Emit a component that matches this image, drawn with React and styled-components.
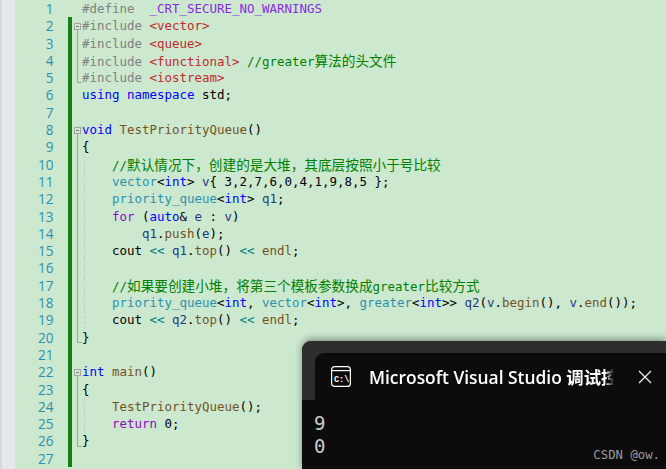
import React from "react";
import styled, { createGlobalStyle } from "styled-components";

const Global = createGlobalStyle`
  html, body { margin: 0; padding: 0; background: #cce8cf; }
  #root { width: 666px; height: 469px; overflow: hidden; }
`;

const colors = {
  pre: "#808080",
  macro: "#8a2be2",
  inc: "#c02a2a",
  kw: "#0000ff",
  type: "#2b91af",
  fn: "#74531f",
  com: "#008000",
  local: "#1f377f",
  op: "#008080",
  ret: "#8f08c4",
  txt: "#000000",
};

// [text, kind]; kind "han" is the comment's chinese text
const lines = [
  { t: [["#define  ", "pre"], ["_CRT_SECURE_NO_WARNINGS", "macro"]] },
  { fold: "open", t: [["#include ", "pre"], ["<vector>", "inc"]] },
  { fold: "line", t: [["#include ", "pre"], ["<queue>", "inc"]] },
  { fold: "line", t: [["#include ", "pre"], ["<functional>", "inc"], [" ", "txt"], ["//greater", "com"], ["算法的头文件", "han"]] },
  { fold: "end", t: [["#include ", "pre"], ["<iostream>", "inc"]] },
  { t: [["using namespace", "kw"], [" std;", "txt"]] },
  { t: [] },
  { fold: "open", t: [["void", "kw"], [" ", "txt"], ["TestPriorityQueue", "fn"], ["()", "txt"]] },
  { fold: "line", t: [["{", "txt"]] },
  { fold: "line", guide: 1, t: [["    //", "com"], ["默认情况下，创建的是大堆，其底层按照小于号比较", "han"]] },
  { fold: "line", guide: 1, t: [["    ", "txt"], ["vector", "type"], ["<", "txt"], ["int", "kw"], ["> ", "txt"], ["v", "local"], ["{ 3,2,7,6,0,4,1,9,8,5 };", "txt"]] },
  { fold: "line", guide: 1, t: [["    ", "txt"], ["priority_queue", "type"], ["<", "txt"], ["int", "kw"], ["> ", "txt"], ["q1", "local"], [";", "txt"]] },
  { fold: "line", guide: 1, t: [["    ", "txt"], ["for", "ret"], [" (", "txt"], ["auto", "kw"], ["& ", "txt"], ["e", "local"], [" : ", "txt"], ["v", "local"], [")", "txt"]] },
  { fold: "line", guide: 1, t: [["        ", "txt"], ["q1", "local"], [".", "txt"], ["push", "fn"], ["(", "txt"], ["e", "local"], [");", "txt"]] },
  { fold: "line", guide: 1, t: [["    cout ", "txt"], ["<<", "op"], [" ", "txt"], ["q1", "local"], [".", "txt"], ["top", "fn"], ["() ", "txt"], ["<<", "op"], [" ", "txt"], ["endl", "fn"], [";", "txt"]] },
  { fold: "line", guide: 1, t: [] },
  { fold: "line", guide: 1, t: [["    //", "com"], ["如果要创建小堆，将第三个模板参数换成", "han"], ["greater", "com"], ["比较方式", "han"]] },
  { fold: "line", guide: 1, t: [["    ", "txt"], ["priority_queue", "type"], ["<", "txt"], ["int", "kw"], [", ", "txt"], ["vector", "type"], ["<", "txt"], ["int", "kw"], [">, ", "txt"], ["greater", "type"], ["<", "txt"], ["int", "kw"], [">> ", "txt"], ["q2", "local"], ["(", "txt"], ["v", "local"], [".", "txt"], ["begin", "fn"], ["(), ", "txt"], ["v", "local"], [".", "txt"], ["end", "fn"], ["());", "txt"]] },
  { fold: "line", guide: 1, t: [["    cout ", "txt"], ["<<", "op"], [" ", "txt"], ["q2", "local"], [".", "txt"], ["top", "fn"], ["() ", "txt"], ["<<", "op"], [" ", "txt"], ["endl", "fn"], [";", "txt"]] },
  { fold: "end", t: [["}", "txt"]] },
  { t: [] },
  { fold: "open", t: [["int", "kw"], [" ", "txt"], ["main", "fn"], ["()", "txt"]] },
  { fold: "line", t: [["{", "txt"]] },
  { fold: "line", guide: 1, t: [["    ", "txt"], ["TestPriorityQueue", "fn"], ["();", "txt"]] },
  { fold: "line", guide: 1, t: [["    ", "txt"], ["return", "ret"], [" 0;", "txt"]] },
  { fold: "end", t: [["}", "txt"]] },
  { t: [] },
];

const Page = styled.div`
  position: relative;
  display: flex;
  width: 666px;
  height: 469px;
  overflow: hidden;
  background: #cce8cf;
`;

const Margin = styled.div`
  flex: 0 0 15px;
  box-sizing: border-box;
  background: #e6e7ea;
  border-left: 2px solid #d5d5e5;
`;

const Editor = styled.div`
  flex: 1;
`;

const Row = styled.div`
  display: flex;
  height: 17.31px;
  line-height: 17.31px;
  font-family: "DejaVu Sans Mono", monospace;
  font-size: 12.46px;
  white-space: pre;
`;

const LineNo = styled.div`
  flex: 0 0 38.5px;
  text-align: right;
  color: #2b91af;
  font-family: "Open Sans", sans-serif;
  font-size: 13.6px;
`;

const Change = styled.div`
  flex: 0 0 4px;
  margin-left: 14.5px;
  background: ${(p) => (p.$on ? "#128012" : "transparent")};
`;

const Fold = styled.div`
  position: relative;
  flex: 0 0 10px;
`;

const FoldBox = styled.span`
  position: absolute;
  left: 2px;
  top: 6px;
  width: 5px;
  height: 5px;
  border: 1px solid #a5a5a5;
  &::after {
    content: "";
    position: absolute;
    left: 1px;
    top: 2px;
    width: 3px;
    height: 1px;
    background: #808080;
  }
`;

const FoldLine = styled.span`
  position: absolute;
  left: 5px;
  top: 0;
  bottom: ${(p) => (p.$end ? "3px" : "0")};
  width: 1px;
  background: #a5a5a5;
  &::after {
    content: "";
    display: ${(p) => (p.$end ? "block" : "none")};
    position: absolute;
    left: 0;
    bottom: 0;
    width: 5px;
    height: 1px;
    background: #a5a5a5;
  }
`;

const FoldTail = styled.span`
  position: absolute;
  left: 5px;
  top: 12px;
  bottom: 0;
  width: 1px;
  background: #a5a5a5;
`;

const Code = styled.div`
  position: relative;
  flex: 1;
`;

const Guide = styled.span`
  position: absolute;
  left: 2px;
  top: 0;
  bottom: 0;
  border-left: 1px dashed #c9c9cf;
`;

const Tok = styled.span`
  color: ${(p) => colors[p.$kind]};
`;

const Han = styled.span`
  color: #008000;
  font-family: "Noto Sans CJK SC", sans-serif;
  font-size: 13.65px;
`;

const Terminal = styled.div`
  position: absolute;
  left: 302px;
  top: 341px;
  width: 364px;
  height: 128px;
  display: flex;
  flex-direction: column;
  background: #0c0c0c;
  border-top-left-radius: 9px;
  box-shadow: 0 -2px 7px rgba(0, 0, 0, 0.4);
`;

const TitleBar = styled.div`
  display: flex;
  height: 59px;
  background: #2e2e2e;
  border-top-left-radius: 9px;
  padding: 12px 0 0 13px;
  box-sizing: border-box;
`;

const Tab = styled.div`
  flex: 1;
  display: flex;
  align-items: center;
  background: #0c0c0c;
  border-top-left-radius: 9px;
  padding-left: 16px;
  min-width: 0;
`;

const Title = styled.div`
  width: 245px;
  margin-left: 18px;
  overflow: hidden;
  white-space: nowrap;
  color: #fff;
  font-family: "Open Sans", "Noto Sans CJK SC", sans-serif;
  font-weight: 600;
  font-size: 17.4px;
  -webkit-mask-image: linear-gradient(to right, #000 236px, transparent 245px);
`;

const Close = styled.svg`
  margin-left: 24px;
  width: 14px;
  height: 14px;
  stroke: #f0f0f0;
  stroke-width: 1.2;
  fill: none;
`;

const Output = styled.div`
  padding: 0 0 0 12px;
  color: #cccccc;
  font-family: "DejaVu Sans Mono", monospace;
  font-size: 19px;
  line-height: 23px;
  margin-top: 12px;
`;

const Mark = styled.div`
  position: absolute;
  right: 6px;
  bottom: 7px;
  color: #9a9a9a;
  font-family: "DejaVu Sans Mono", monospace;
  font-size: 12.3px;
`;

const ConsoleIcon = () => (
  <svg width="20" height="21" viewBox="0 0 20 21" fill="none" stroke="#fff" strokeWidth="1.2">
    <rect x="0.6" y="0.6" width="18.8" height="19.8" rx="3" />
    <line x1="0.6" y1="4.6" x2="19.4" y2="4.6" />
    <text x="3" y="15.5" fill="#fff" stroke="none" fontSize="8.5" fontWeight="700" fontFamily="Liberation Mono, monospace">C:\</text>
  </svg>
);

export default function App() {
  return (
    <Page>
      <Global />
      <Margin />
      <Editor>
        {lines.map((l, i) => (
          <Row key={i}>
            <LineNo>{i + 1}</LineNo>
            <Change $on={i > 0} />
            <Fold>
              {l.fold === "open" && <FoldBox />}
              {l.fold === "open" && <FoldTail />}
              {l.fold === "line" && <FoldLine />}
              {l.fold === "end" && <FoldLine $end />}
            </Fold>
            <Code>
              {l.guide && <Guide />}
              {l.t.map(([text, kind], j) =>
                kind === "han" ? (
                  <Han key={j}>{text}</Han>
                ) : (
                  <Tok key={j} $kind={kind}>{text}</Tok>
                )
              )}
            </Code>
          </Row>
        ))}
      </Editor>
      <Terminal>
        <TitleBar>
          <Tab>
            <ConsoleIcon />
            <Title>Microsoft Visual Studio 调试控制台</Title>
            <Close viewBox="0 0 14 14">
              <path d="M1 1 L13 13 M13 1 L1 13" />
            </Close>
          </Tab>
        </TitleBar>
        <Output>
          <div>9</div>
          <div>0</div>
        </Output>
        <Mark>CSDN @ow.</Mark>
      </Terminal>
    </Page>
  );
}
